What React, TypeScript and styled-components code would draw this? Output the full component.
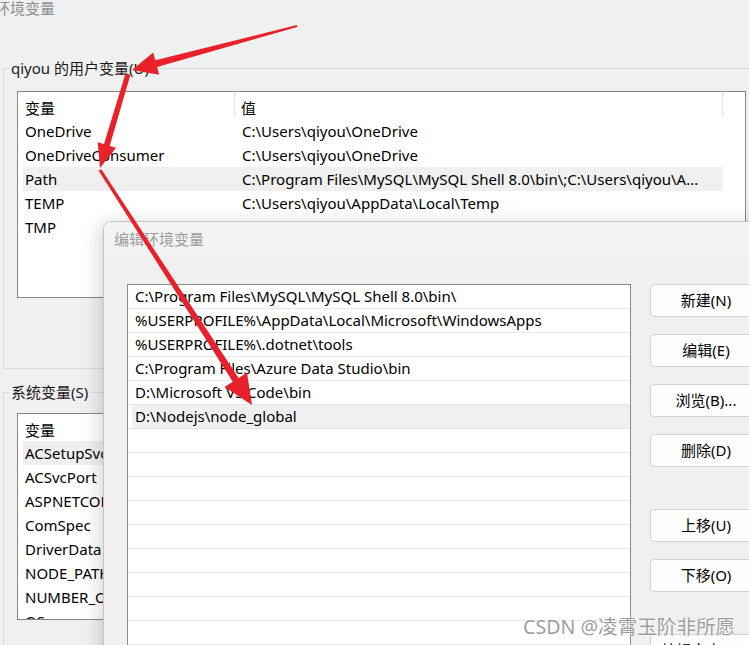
import React from "react";
import styled, { createGlobalStyle } from "styled-components";

const GlobalStyle = createGlobalStyle`
  html, body {
    margin: 0;
    padding: 0;
    background: #f0f0f0;
  }
  body {
    font-family: "Noto Sans", "Noto Sans CJK SC", sans-serif;
    color: #000;
  }
`;

const userVars = [
  { name: "OneDrive", value: "C:\\Users\\qiyou\\OneDrive" },
  { name: "OneDriveConsumer", value: "C:\\Users\\qiyou\\OneDrive" },
  {
    name: "Path",
    value: "C:\\Program Files\\MySQL\\MySQL Shell 8.0\\bin\\;C:\\Users\\qiyou\\A...",
    selected: true,
  },
  { name: "TEMP", value: "C:\\Users\\qiyou\\AppData\\Local\\Temp" },
  { name: "TMP", value: "C:\\Users\\qiyou\\AppData\\Local\\Temp" },
];

const systemVars = [
  { name: "ACSetupSvcPort", value: "23210", selected: true },
  { name: "ACSvcPort", value: "17532" },
  { name: "ASPNETCORE_ENVIRONMENT", value: "Development" },
  { name: "ComSpec", value: "C:\\Windows\\system32\\cmd.exe" },
  { name: "DriverData", value: "C:\\Windows\\System32\\Drivers\\DriverData" },
  { name: "NODE_PATH", value: "D:\\Nodejs\\node_global\\node_modules" },
  { name: "NUMBER_OF_PROCESSORS", value: "16" },
  { name: "OS", value: "Windows_NT" },
];

const pathEntries = [
  "C:\\Program Files\\MySQL\\MySQL Shell 8.0\\bin\\",
  "%USERPROFILE%\\AppData\\Local\\Microsoft\\WindowsApps",
  "%USERPROFILE%\\.dotnet\\tools",
  "C:\\Program Files\\Azure Data Studio\\bin",
  "D:\\Microsoft VS Code\\bin",
  "D:\\Nodejs\\node_global",
];

const buttons = [
  { label: "新建(N)", extra: 0 },
  { label: "编辑(E)", extra: 0 },
  { label: "浏览(B)...", extra: 0 },
  { label: "删除(D)", extra: 0 },
  { label: "上移(U)", extra: 25 },
  { label: "下移(O)", extra: 0 },
  { label: "编辑文本(T)...", extra: 25 },
];

// tapered arrow: tail -> tip
const arrowPoints = (
  tx: number,
  ty: number,
  px: number,
  py: number,
  tailW: number,
  baseW: number,
  headL: number,
  headW: number
) => {
  const dx = px - tx;
  const dy = py - ty;
  const len = Math.sqrt(dx * dx + dy * dy);
  const ux = dx / len;
  const uy = dy / len;
  const nx = -uy;
  const ny = ux;
  const bx = px - ux * headL;
  const by = py - uy * headL;
  const pts = [
    [tx + (nx * tailW) / 2, ty + (ny * tailW) / 2],
    [bx + (nx * baseW) / 2, by + (ny * baseW) / 2],
    [bx + (nx * headW) / 2, by + (ny * headW) / 2],
    [px, py],
    [bx - (nx * headW) / 2, by - (ny * headW) / 2],
    [bx - (nx * baseW) / 2, by - (ny * baseW) / 2],
    [tx - (nx * tailW) / 2, ty - (ny * tailW) / 2],
  ];
  return pts.map((p) => p[0].toFixed(1) + "," + p[1].toFixed(1)).join(" ");
};

const App = () => {
  return (
    <>
      <GlobalStyle />
      <Screen>
        <ParentWindow>
          <WindowTitle>环境变量</WindowTitle>

          <GroupBox $top={52}>
            <Legend>qiyou 的用户变量(U)</Legend>
            <VarList $gap={13}>
              <HeaderRow>
                <HeadCell $w={212}>变量</HeadCell>
                <HeadCell $w={488}>值</HeadCell>
              </HeaderRow>
              {userVars.map((v) => (
                <VarRow key={v.name} $selected={!!v.selected}>
                  <NameCell>{v.name}</NameCell>
                  <ValueCell>{v.value}</ValueCell>
                </VarRow>
              ))}
            </VarList>
          </GroupBox>

          <GroupBox $top={23}>
            <Legend>系统变量(S)</Legend>
            <VarList $gap={11}>
              <HeaderRow>
                <HeadCell $w={212}>变量</HeadCell>
                <HeadCell $w={488}>值</HeadCell>
              </HeaderRow>
              {systemVars.map((v) => (
                <VarRow key={v.name} $selected={!!v.selected}>
                  <NameCell>{v.name}</NameCell>
                  <ValueCell>{v.value}</ValueCell>
                </VarRow>
              ))}
            </VarList>
          </GroupBox>
        </ParentWindow>

        <EditDialog>
          <DialogTitleBar>编辑环境变量</DialogTitleBar>
          <DialogBody>
            <PathList>
              {pathEntries.map((p, i) => (
                <PathRow key={p} $selected={i === pathEntries.length - 1}>
                  {p}
                </PathRow>
              ))}
              {Array.from({ length: 10 }).map((_, i) => (
                <PathRow key={"empty" + i} $selected={false} />
              ))}
            </PathList>
            <ButtonColumn>
              {buttons.map((b) => (
                <DialogButton key={b.label} $extra={b.extra}>
                  {b.label}
                </DialogButton>
              ))}
            </ButtonColumn>
          </DialogBody>
        </EditDialog>

        <Arrows width="749" height="645" viewBox="0 0 749 645">
          <polygon
            points={arrowPoints(297, 26, 132, 70, 2, 7, 25, 23)}
            fill="#e8212b"
          />
          <polygon
            points={arrowPoints(128, 74, 100, 168, 5, 6, 24, 19)}
            fill="#e8212b"
          />
          <polygon
            points={arrowPoints(100, 170, 252, 405, 3, 7, 30, 27)}
            fill="#e8212b"
          />
        </Arrows>

        <Watermark>CSDN @凌霄玉阶非所愿</Watermark>
      </Screen>
    </>
  );
};

export default App;

const Screen = styled.div`
  position: relative;
  width: 749px;
  height: 645px;
  overflow: hidden;
  background: #f0f0f0;
`;

const ParentWindow = styled.div`
  display: flex;
  flex-direction: column;
  padding-left: 3px;
`;

const WindowTitle = styled.div`
  margin-left: -8px;
  height: 16px;
  line-height: 16px;
  font-size: 15px;
  color: #8e8e8e;
  font-family: "Noto Sans CJK SC", sans-serif;
`;

const GroupBox = styled.div<{ $top: number }>`
  margin-top: ${(p) => p.$top}px;
  border: 1px solid #d9d9d9;
  border-right: none;
  padding: 0 0 70px 13px;
  width: 800px;
`;

const Legend = styled.div`
  width: fit-content;
  margin: -11px 0 0 -7px;
  padding: 0 2px 0 1px;
  height: 20px;
  line-height: 20px;
  font-size: 15px;
  color: #1a1a1a;
  background: #f0f0f0;
  white-space: nowrap;
`;

const VarList = styled.div<{ $gap: number }>`
  margin-top: ${(p) => p.$gap}px;
  height: 205px;
  border: 1px solid #858585;
  background: #fff;
  padding-left: 5px;
  box-sizing: content-box;
  overflow: hidden;
  width: 722px;
`;

const HeaderRow = styled.div`
  display: flex;
  height: 27px;
  width: 700px;
`;

const HeadCell = styled.div<{ $w: number }>`
  width: ${(p) => p.$w}px;
  box-sizing: border-box;
  padding: 4px 0 0 2px;
  font-size: 15px;
  line-height: 22px;
  border-right: 1px solid #e5e5e5;
  margin-top: 1px;
  height: 25px;
  &:last-child {
    padding-left: 6px;
  }
`;

const VarRow = styled.div<{ $selected: boolean }>`
  display: flex;
  width: 700px;
  height: 24px;
  align-items: center;
  font-size: 15px;
  white-space: nowrap;
  background: ${(p) => (p.$selected ? "#f0f0f0" : "transparent")};
`;

const NameCell = styled.div`
  width: 212px;
  padding-left: 2px;
  box-sizing: border-box;
  overflow: hidden;
`;

const ValueCell = styled.div`
  flex: 1;
  padding-left: 7px;
  overflow: hidden;
`;

const EditDialog = styled.div`
  position: absolute;
  left: 103px;
  top: 221px;
  width: 720px;
  height: 480px;
  border: 1px solid #c4c4c4;
  border-radius: 8px 0 0 0;
  background: #f0f0f0;
  box-shadow: -4px 2px 18px rgba(0, 0, 0, 0.16);
  display: flex;
  flex-direction: column;
  overflow: hidden;
`;

const DialogTitleBar = styled.div`
  height: 34px;
  line-height: 34px;
  padding-left: 10px;
  font-size: 15px;
  color: #9c9c9c;
  background: #f3f3f3;
  font-family: "Noto Sans CJK SC", sans-serif;
`;

const DialogBody = styled.div`
  display: flex;
  align-items: flex-start;
  gap: 19px;
  padding: 28px 0 0 23px;
`;

const PathList = styled.div`
  width: 502px;
  height: 420px;
  border: 1px solid #8a8a8a;
  background: #fff;
  overflow: hidden;
`;

const PathRow = styled.div<{ $selected: boolean }>`
  height: 23px;
  line-height: 23px;
  border-bottom: 1px solid #e9e9e9;
  padding-left: 7px;
  font-size: 15px;
  white-space: nowrap;
  overflow: hidden;
  background: ${(p) =>
    p.$selected
      ? "linear-gradient(to right, #fff 4px, #f0f0f0 4px)"
      : "transparent"};
`;

const ButtonColumn = styled.div`
  display: flex;
  flex-direction: column;
  gap: 17px;
`;

const DialogButton = styled.div<{ $extra: number }>`
  width: 110px;
  height: 31px;
  margin-top: ${(p) => p.$extra}px;
  border: 1px solid #d3d3d3;
  border-radius: 4px;
  background: #fdfdfd;
  font-size: 15px;
  line-height: 31px;
  text-align: center;
  white-space: nowrap;
`;

const Arrows = styled.svg`
  position: absolute;
  left: 0;
  top: 0;
  pointer-events: none;
`;

const Watermark = styled.div`
  position: absolute;
  left: 523px;
  top: 614px;
  font-size: 19.6px;
  line-height: 26px;
  color: rgba(140, 140, 140, 0.85);
  white-space: nowrap;
  font-family: "Noto Sans", "Noto Sans CJK SC", sans-serif;
  text-shadow: 0 0 2px #fff, 0 0 1px #fff;
`;
